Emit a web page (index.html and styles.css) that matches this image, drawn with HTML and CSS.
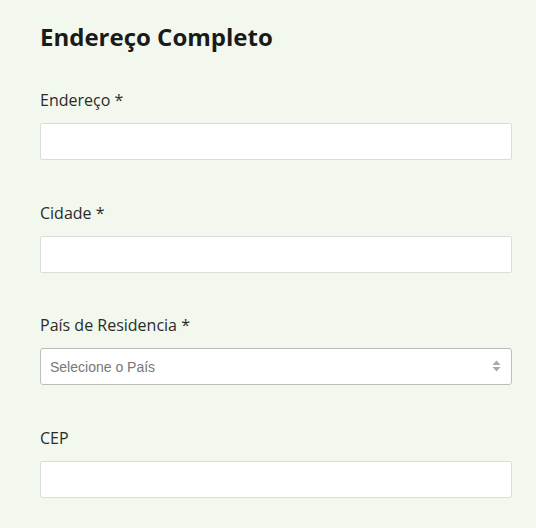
FILE: index.html
```html
<!DOCTYPE html>
<html lang="pt">
<head>
    <meta charset="UTF-8">
    <meta name="viewport" content="width=device-width, initial-scale=1.0">
    <title>Endereço</title>

    <link rel="stylesheet" href="styles.css">
</head>
<body>
    <div class="form">
        <h2 class="title">Endereço Completo</h2>

        <div class="field">
            <label for="endereco">Endereço *</label>
            <input type="text" id="endereco">
        </div>

        <div class="field">
            <label for="cidade">Cidade *</label>
            <input type="text" id="cidade">
        </div>

        <div class="field">
            <label for="pais">País de Residencia *</label>
            <div class="select-wrap">
                <select id="pais">
                    <option>Selecione o País</option>
                </select>
                <svg class="arrows" width="9" height="12" viewBox="0 0 9 12">
                    <path d="M4.5 0.5 L8.5 5 H0.5 Z" fill="#aaa"/>
                    <path d="M4.5 11.5 L8.5 7 H0.5 Z" fill="#aaa"/>
                </svg>
            </div>
        </div>

        <div class="field">
            <label for="cep">CEP</label>
            <input type="text" id="cep">
        </div>
    </div>
</body>
</html>
```

FILE: styles.css
```css
body{
    margin: 0;
    background-color: #f2f8ed;
    font-family: "Open Sans", sans-serif;
    color: #222;
}

.form{
    padding: 22px 24px 0 40px;
}

.title{
    margin: 0 0 36px 0;
    font-size: 24px;
    line-height: 30px;
    font-weight: 700;
    color: #1a1a1a;
}

.field{
    display: flex;
    flex-direction: column;
    margin-bottom: 40.67px;
}

label{
    font-size: 16px;
    line-height: 24px;
    margin-bottom: 11px;
    color: #2b2b2b;
}

input{
    box-sizing: border-box;
    height: 37px;
    width: 100%;
    border: 1px solid #dcdcdc;
    border-radius: 2px;
    background: white;
    margin: 0;
}

.select-wrap{
    position: relative;
}

select{
    box-sizing: border-box;
    width: 100%;
    height: 37px;
    appearance: none;
    border: 1px solid #bdbdbd;
    border-radius: 3px;
    background: white;
    padding: 0 9px;
    font-family: "Liberation Sans", Arial, sans-serif;
    font-size: 14px;
    color: #777;
    margin: 0;
}

.arrows{
    position: absolute;
    right: 11px;
    top: 12px;
}
```
